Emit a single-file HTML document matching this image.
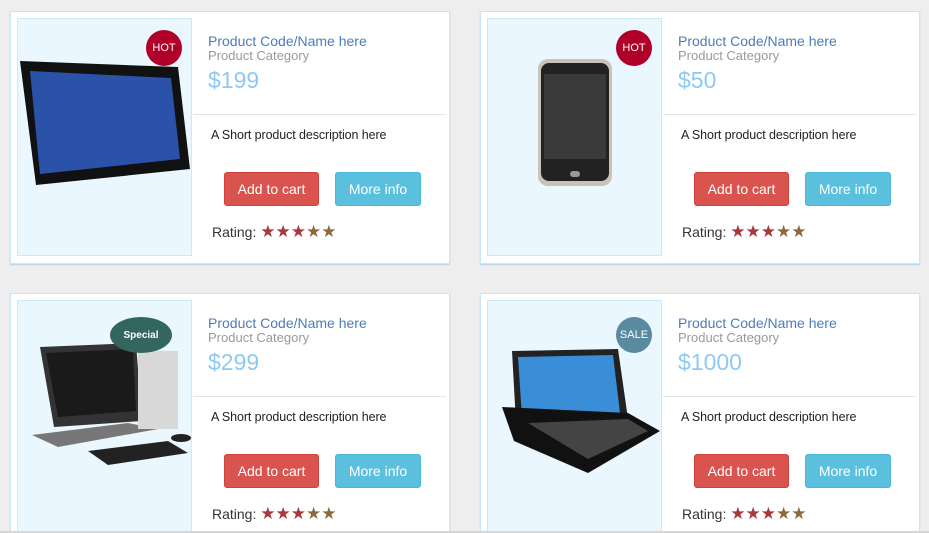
<!DOCTYPE html>
<html style="overflow:hidden;width:929px;height:533px"><head><style>
*{box-sizing:border-box;margin:0;padding:0}
body{width:929px;height:533px;background:#eeeeee;overflow:hidden;position:relative;font-family:"Liberation Sans",sans-serif}
.card{position:absolute;width:440px;height:253px;background:#fff;border:1px solid #c9e6f7;box-shadow:0 1px 1px #a8d6f2}
.img{position:absolute;left:6px;top:6px;width:175px;height:238px;background:#eaf7fe;border:1px solid #cfe8f7;overflow:hidden}
.badge{position:absolute;color:#fff;font-size:11px;display:flex;align-items:center;justify-content:center;border-radius:50%}
.name{position:absolute;left:197px;top:21px;font-size:14px;color:#4c7cb9}
.cat{position:absolute;left:197px;top:36px;font-size:13px;color:#9a9a9a}
.price{position:absolute;left:197px;top:55px;font-size:23px;color:#8ccaf3}
.hr{position:absolute;left:182px;top:102px;width:253px;border-top:1px solid #dde7ee}
.desc{position:absolute;left:200px;top:116px;font-size:12.5px;color:#222;letter-spacing:-0.1px}
.btn{position:absolute;top:160px;height:34px;color:#fff;font-size:14px;display:flex;align-items:center;justify-content:center;border-radius:3px}
.red{left:213px;width:95px;background:#d9534f;border:1px solid #d43f3a}
.blue{left:324px;width:86px;background:#5bc0de;border:1px solid #46b8da}
.rate{position:absolute;left:201px;top:211px;font-size:14px;color:#333;line-height:18px}
.rate span{font-size:17px;letter-spacing:0px}
.s1{color:#a8383c}.s2{color:#8e6a3a}
</style></head><body>

<div class="card" style="left:10px;top:11px">
 <div class="img">
  <svg width="175" height="238"><polygon points="2,42 160,48 172,150 18,166" fill="#111"/><polygon points="12,52 153,59 162,140 22,155" fill="#2a52a8"/></svg>
  <div class="badge" style="left:128px;top:11px;width:36px;height:36px;background:#b0002a">HOT</div>
 </div>
 <div class="name">Product Code/Name here</div><div class="cat">Product Category</div><div class="price">$199</div>
 <div class="hr"></div><div class="desc">A Short product description here</div>
 <div class="btn red">Add to cart</div><div class="btn blue">More info</div>
 <div class="rate">Rating: <span class="s1">★★★</span><span class="s2">★★</span></div>
</div>

<div class="card" style="left:480px;top:11px">
 <div class="img">
  <svg width="175" height="238"><rect x="50" y="40" width="74" height="127" rx="10" fill="#c8c2b8"/><rect x="53" y="44" width="68" height="118" rx="8" fill="#222"/><rect x="56" y="55" width="62" height="85" fill="#3a3a3a"/><rect x="82" y="152" width="10" height="6" rx="3" fill="#999"/></svg>
  <div class="badge" style="left:128px;top:11px;width:36px;height:36px;background:#b0002a">HOT</div>
 </div>
 <div class="name">Product Code/Name here</div><div class="cat">Product Category</div><div class="price">$50</div>
 <div class="hr"></div><div class="desc">A Short product description here</div>
 <div class="btn red">Add to cart</div><div class="btn blue">More info</div>
 <div class="rate">Rating: <span class="s1">★★★</span><span class="s2">★★</span></div>
</div>

<div class="card" style="left:10px;top:293px">
 <div class="img">
  <svg width="175" height="238"><polygon points="22,46 118,42 124,120 36,126" fill="#333"/><polygon points="28,52 115,48 118,110 40,116" fill="#1a1a1a"/><polygon points="14,134 110,122 140,128 40,146" fill="#777"/><rect x="120" y="50" width="40" height="78" fill="#d8d8d8"/><polygon points="70,150 150,140 170,152 90,164" fill="#222"/><ellipse cx="163" cy="137" rx="10" ry="4" fill="#222"/></svg>
  <div class="badge" style="left:92px;top:16px;width:62px;height:36px;background:#336660;font-weight:bold;font-size:10px">Special</div>
 </div>
 <div class="name">Product Code/Name here</div><div class="cat">Product Category</div><div class="price">$299</div>
 <div class="hr"></div><div class="desc">A Short product description here</div>
 <div class="btn red">Add to cart</div><div class="btn blue">More info</div>
 <div class="rate">Rating: <span class="s1">★★★</span><span class="s2">★★</span></div>
</div>

<div class="card" style="left:480px;top:293px">
 <div class="img">
  <svg width="175" height="238"><polygon points="24,50 130,48 140,118 28,122" fill="#222"/><polygon points="30,56 125,54 132,112 34,116" fill="#3a8ed8"/><polygon points="14,106 140,112 172,130 100,172 26,140" fill="#111"/><polygon points="40,122 140,118 160,130 100,158" fill="#444"/></svg>
  <div class="badge" style="left:128px;top:16px;width:36px;height:36px;background:#5a8aa0">SALE</div>
 </div>
 <div class="name">Product Code/Name here</div><div class="cat">Product Category</div><div class="price">$1000</div>
 <div class="hr"></div><div class="desc">A Short product description here</div>
 <div class="btn red">Add to cart</div><div class="btn blue">More info</div>
 <div class="rate">Rating: <span class="s1">★★★</span><span class="s2">★★</span></div>
</div>
<div style="position:absolute;left:0;top:531px;width:929px;height:2px;background:#d6d6d6"></div>
</body></html>
